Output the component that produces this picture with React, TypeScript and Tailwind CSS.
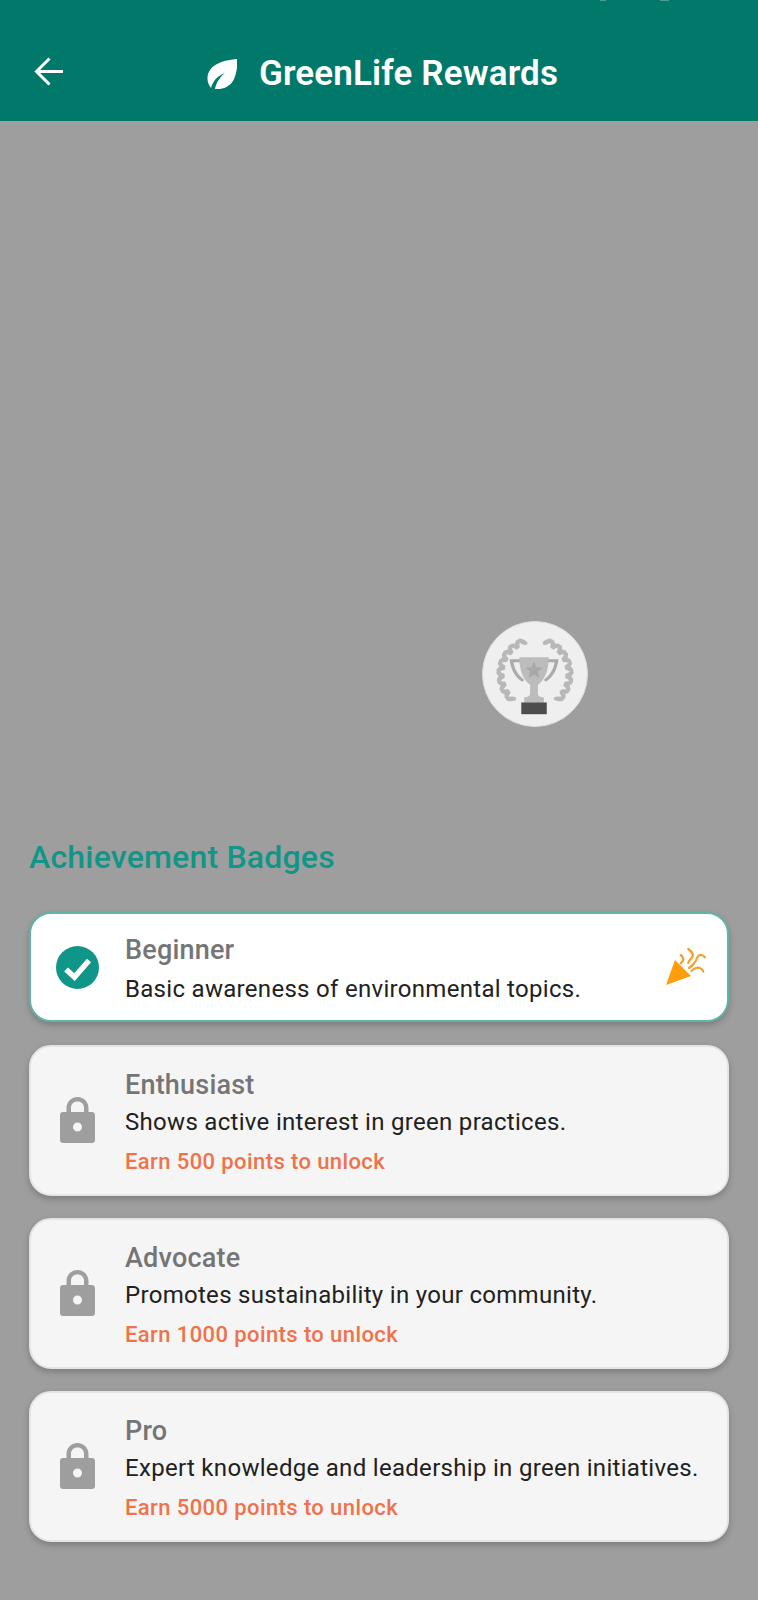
import React from 'react';

const roboto = { fontFamily: 'Roboto, sans-serif' };

function Arrow() {
  return (
    <svg width="30" height="29" viewBox="0 0 30 29" className="absolute left-[34px] top-[57px]">
      <path d="M29 14.500H2.500M15.500 1.500L2.500 14.500L15.500 27.500" fill="none" stroke="#fff" strokeWidth="3" />
    </svg>
  );
}

function Leaf() {
  return (
    <svg width="30" height="30" viewBox="0 0 30 30" className="shrink-0">
      <path fill="#fff" d="M30 0C18 1 8 4 3 11C-1 17 0 24 4 29C6 22 10 17 18 14C13 18 9 24 8 30C16 31 24 27 27 20C30 13 30.500 7 30 0Z" />
    </svg>
  );
}

function Laurel() {
  const nodes = Array.from({ length: 8 }, (_, i) => -26 - i * 15);
  return (
    <g fill="#b8b8b8">
      {nodes.map(t => {
        const a = (t * Math.PI) / 180;
        const x = 52 + 39 * Math.sin(a);
        const y = 52 - 39 * Math.cos(a);
        return (
          <g key={t} transform={`translate(${x} ${y}) rotate(${t + 90})`}>
            <ellipse cx="4" cy="-3.200" rx="5.200" ry="2.400" transform="rotate(-38 4 -3.200)" />
            <ellipse cx="4" cy="3.200" rx="5.200" ry="2.400" transform="rotate(38 4 3.200)" />
          </g>
        );
      })}
    </g>
  );
}

function Trophy() {
  return (
    <div className="h-[106px] w-[106px] rounded-full border border-[#dcdcdc] bg-[#efefef] p-px">
      <svg width="102" height="102" viewBox="0 0 104 104">
        <Laurel />
        <g transform="matrix(-1 0 0 1 104 0)">
          <Laurel />
        </g>
        <path d="M26 37H37V40H30C31 48 36 54 41 58L39 60C32 56 27 47 26 37ZM76 37H65V40H72C71 48 66 54 61 58L63 60C70 56 75 47 76 37Z" fill="#ababab" />
        <path d="M36 35H66C66 50 61 59 55 63V72C55 74 57 76 61 76V81H41V76C45 76 47 74 47 72V63C41 59 36 50 36 35Z" fill="#bcbcbc" />
        <polygon points="51,39 53.500,45 60,45.500 55,49.500 56.500,56 51,52.500 45.500,56 47,49.500 42,45.500 48.500,45" fill="#a8a8a8" />
        <rect x="38" y="81" width="26" height="12" fill="#4d4d4d" />
      </svg>
    </div>
  );
}

function CheckBadge() {
  return (
    <svg width="43" height="43" viewBox="0 0 43 43" className="shrink-0">
      <circle cx="21.500" cy="21.500" r="21.500" fill="#0f9688" />
      <path d="M10 23.500L18.500 31L33 14.500" fill="none" stroke="#fff" strokeWidth="5.500" />
    </svg>
  );
}

function Lock() {
  return (
    <svg width="35" height="46" viewBox="0 0 35 46" className="mb-[2px] shrink-0">
      <path fill="#9e9e9e" fillRule="evenodd" d="M17.500 0C11 0 6.500 5 6.500 11V15H3C1.300 15 0 16.300 0 18V43C0 44.700 1.300 46 3 46H32C33.700 46 35 44.700 35 43V18C35 16.300 33.700 15 32 15H28.500V11C28.500 5 24 0 17.500 0ZM11 15V11C11 7 13.500 4.500 17.500 4.500C21.500 4.500 24 7 24 11V15H11ZM17.500 25.500C20 25.500 22 27.500 22 30C22 32.500 20 34.500 17.500 34.500C15 34.500 13 32.500 13 30C13 27.500 15 25.500 17.500 25.500Z" />
    </svg>
  );
}

function Party() {
  return (
    <svg width="40" height="38" viewBox="0 0 40 38" className="shrink-0">
      <polygon points="0,37 9,12 25,28" fill="#ff9d0a" />
      <g fill="none" stroke="#f5a02a" strokeWidth="2.200" strokeLinecap="round">
        <path d="M14.700 7Q20 11 14.700 15.300" />
        <path d="M22.300 1C25 3 28.500 6 26 9.500C24.500 11.500 23 12.500 22.300 15" />
        <path d="M39 9.300C36 6 33 6 31.500 9C30.500 12 29.500 14 27.500 16C26 18 24.500 19 23 20" />
        <path d="M37.300 23.500C36 20.500 33 19 30 20C28.500 20.500 27 21.500 25.500 23" />
      </g>
    </svg>
  );
}

const locked = [
  { name: 'Enthusiast', desc: 'Shows active interest in green practices.', pts: 'Earn 500 points to unlock' },
  { name: 'Advocate', desc: 'Promotes sustainability in your community.', pts: 'Earn 1000 points to unlock' },
  { name: 'Pro', desc: 'Expert knowledge and leadership in green initiatives.', pts: 'Earn 5000 points to unlock' },
];

export default function App() {
  return (
    <div style={roboto} className="flex h-[1600px] w-[758px] flex-col overflow-hidden bg-[#9e9e9e]">
      <header className="relative flex h-[121px] shrink-0 items-center bg-[#00796b]">
        <span className="absolute left-[600px] top-0 h-px w-[6px] bg-[#4a9c90]" />
        <span className="absolute left-[660px] top-0 h-px w-[9px] bg-[#4a9c90]" />
        <Arrow />
        <div className="flex w-full items-center justify-center gap-[22px] pl-[7px] pt-[26px]">
          <Leaf />
          <span className="text-[35px] font-semibold leading-none tracking-[0.15px] text-white">GreenLife Rewards</span>
        </div>
      </header>

      <section className="relative flex h-[791px] shrink-0 flex-col justify-end pb-[36px] pl-[29px]">
        <div className="absolute left-[482px] top-[500px]">
          <Trophy />
        </div>
        <h2 className="text-[32px] font-medium leading-[38px] tracking-[0.2px] text-[#0f9688]">Achievement Badges</h2>
      </section>

      <div className="flex flex-col gap-[22px] px-[29px]">
        <div className="mb-px flex h-[110px] items-center rounded-[22px] border-2 border-[#5fb5a8] bg-white pl-[25px] pr-[21px] shadow-[0_3px_6px_rgba(0,0,0,0.22)]">
          <CheckBadge />
          <div className="ml-[26px] flex-1 pt-[7px]">
            <div className="text-[27px] font-medium leading-[36px] tracking-[0.2px] text-[#757575]">Beginner</div>
            <div className="mt-[2px] text-[24px] leading-[39px] tracking-[0.3px] text-[#212121]">Basic awareness of environmental topics.</div>
          </div>
          <Party />
        </div>
        {locked.map(b => (
          <div key={b.name} className="flex h-[151px] items-center rounded-[22px] border-2 border-[#e4e4e4] bg-[#f5f5f5] pl-[29px] shadow-[0_3px_6px_rgba(0,0,0,0.22)]">
            <Lock />
            <div className="ml-[30px] flex-1 pt-[8px]">
              <div className="text-[27px] font-medium leading-[36px] tracking-[0.2px] text-[#757575]">{b.name}</div>
              <div className="text-[24px] leading-[39px] tracking-[0.3px] text-[#212121]">{b.desc}</div>
              <div className="text-[22px] font-medium leading-[40px] tracking-[0.4px] text-[#f0724a]">{b.pts}</div>
            </div>
          </div>
        ))}
      </div>
    </div>
  );
}
